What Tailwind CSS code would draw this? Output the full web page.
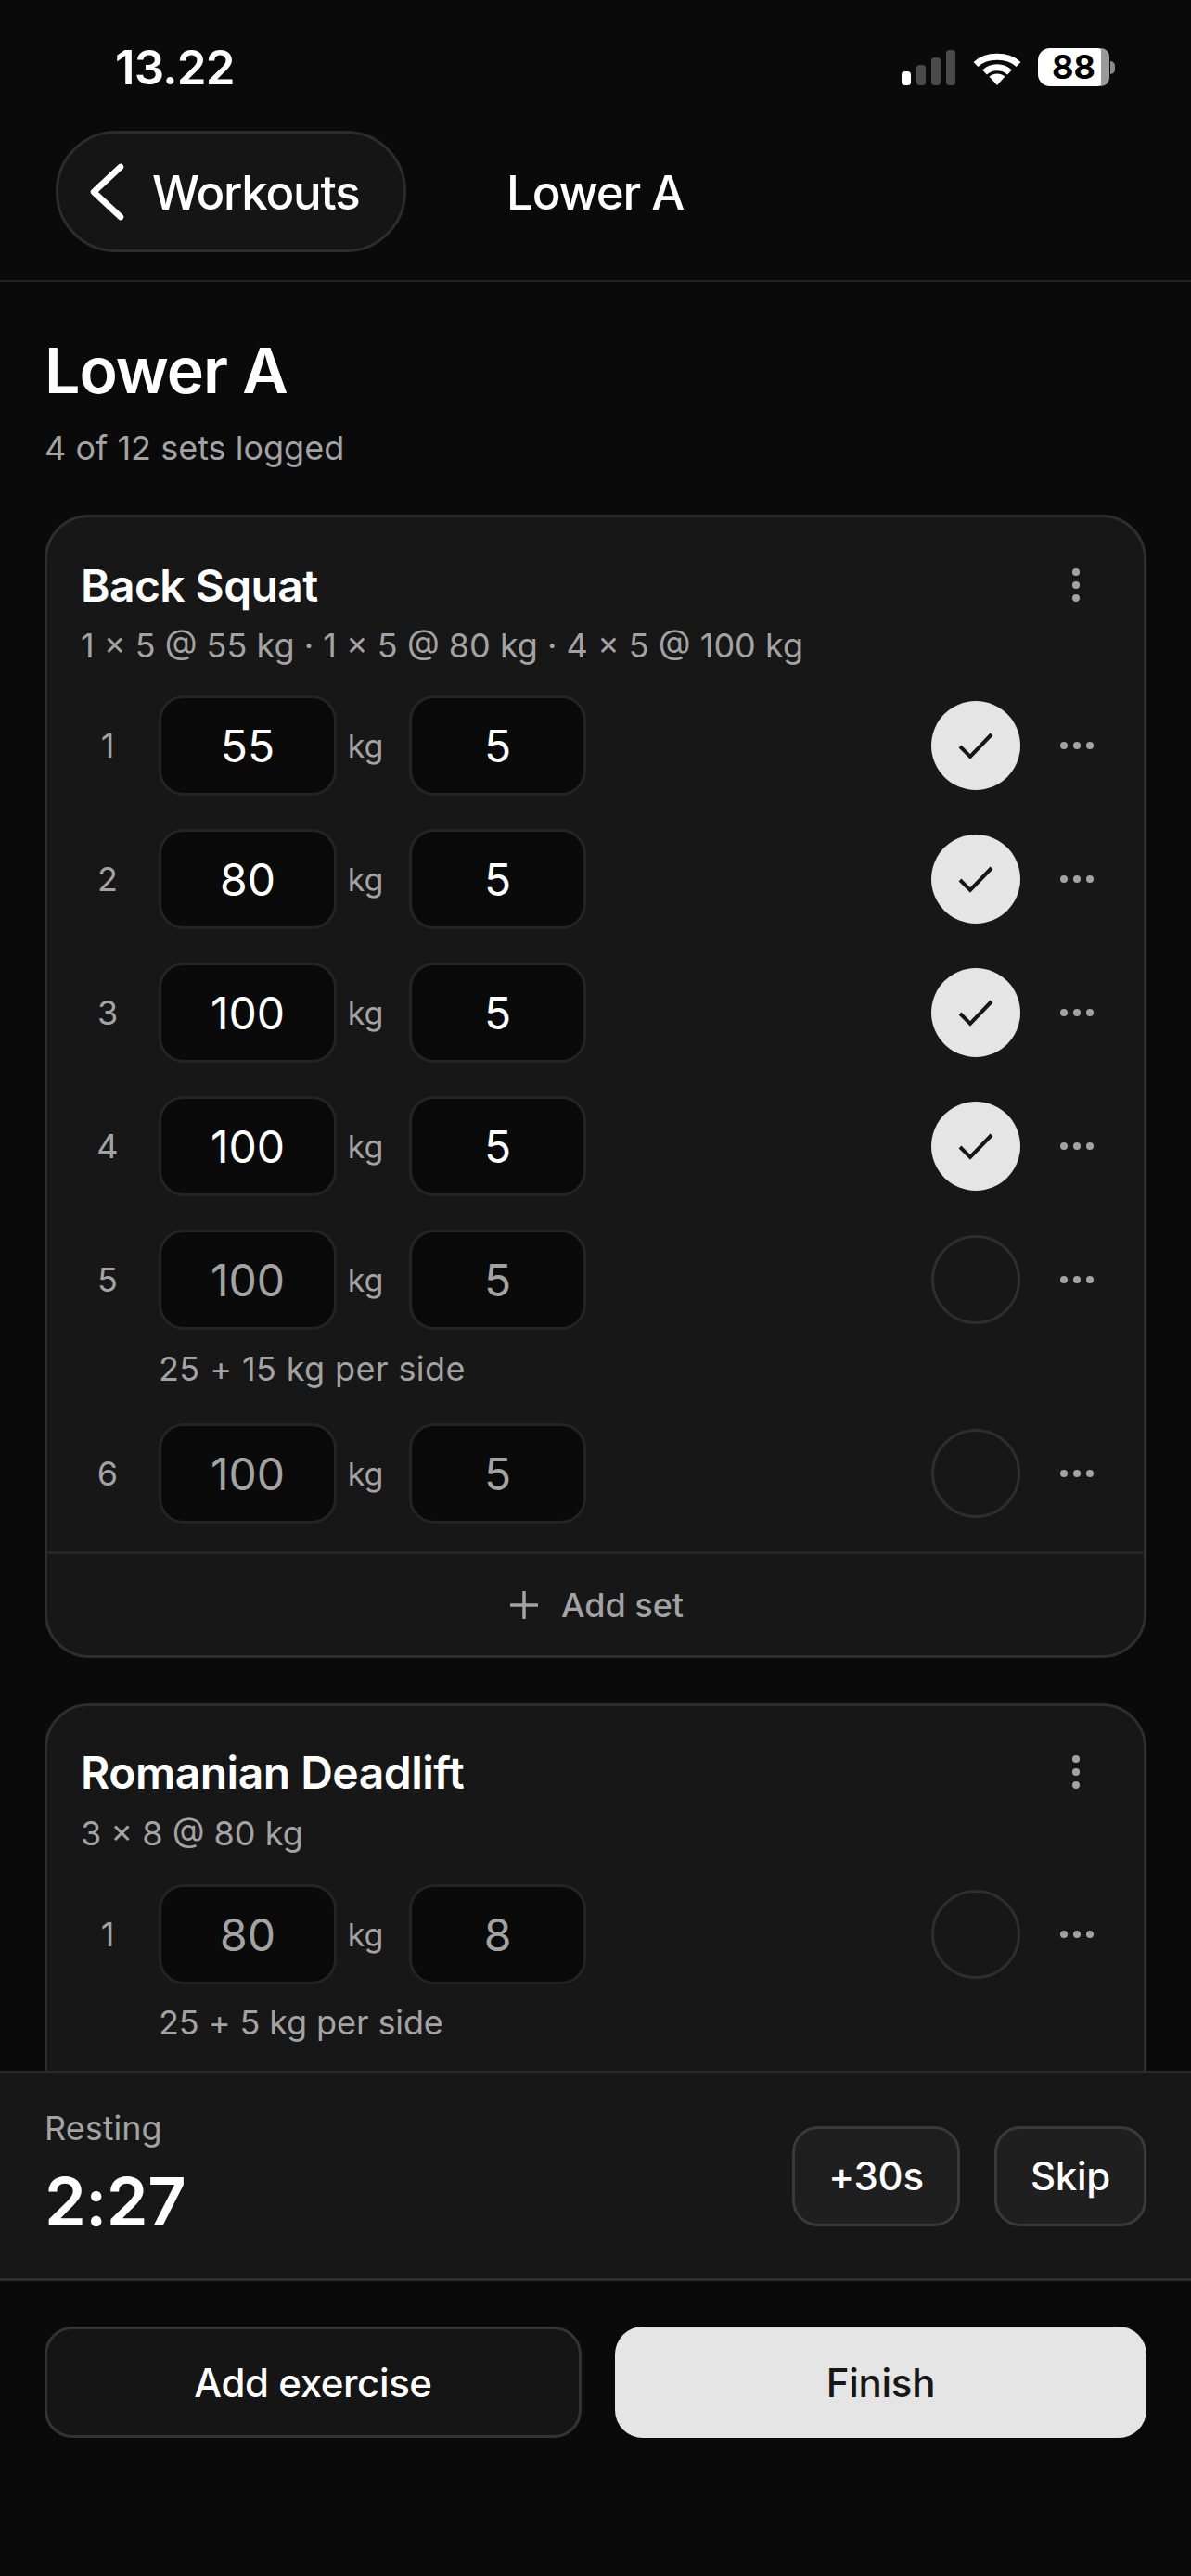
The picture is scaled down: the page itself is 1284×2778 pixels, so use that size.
<!DOCTYPE html>
<html lang="en">
<head>
<meta charset="UTF-8" />
<meta name="viewport" content="width=device-width, initial-scale=1.0" />
<script src="https://cdn.jsdelivr.net/npm/@tailwindcss/browser@4"></script>
<title>Lower A</title>
</head>
<body class="bg-[#0a0a0a] font-['Inter',sans-serif] text-white">
<div class="flex h-[2778px] w-[1284px] flex-col overflow-hidden">

  <!-- status bar -->
  <div class="flex h-[141px] shrink-0 items-start justify-between pl-[124px] pr-[82px] pt-[44px]">
    <span class="text-[51px] leading-[58px] font-semibold tracking-[-0.8px]">13.22</span>
    <div class="flex items-center pt-[8px]">
      <svg class="h-[41px] w-[60px]" viewBox="0 0 60 41"><rect x="1" y="25" width="10" height="15" rx="3.5" fill="#fff"/><rect x="17" y="18" width="10" height="22" rx="3.5" fill="#4a4a4a"/><rect x="33" y="10" width="10" height="30" rx="3.5" fill="#4a4a4a"/><rect x="49" y="2" width="10" height="38" rx="3.5" fill="#4a4a4a"/></svg>
      <svg class="ml-[18px] h-[38px] w-[52px]" viewBox="0 0 52 38"><path d="M3 15.5C14.5 4.5 37.5 4.500 49 15.500" fill="none" stroke="#fff" stroke-width="7"/><path d="M12.500 24C20 17 32 17 39.500 24" fill="none" stroke="#fff" stroke-width="7"/><path d="M17.500 28.500C22.500 24.500 29.500 24.500 34.500 28.500L26 38Z" fill="#fff"/></svg>
      <div class="relative ml-[18px] flex h-[41px] w-[77px] items-center justify-center rounded-[13px] bg-white">
        <div class="absolute inset-y-0 right-0 w-[9px] rounded-r-[13px] bg-[#9a9a9a]"></div>
        <span class="relative text-[36px] leading-[41px] font-bold text-black">88</span>
      </div>
      <div class="ml-[1px] h-[14px] w-[5px] rounded-r-full bg-[#8a8a8a]"></div>
    </div>
  </div>

  <!-- nav -->
  <div class="flex h-[163px] shrink-0 items-start border-b-[2px] border-[#222] pl-[60px]">
    <div class="flex h-[131px] w-[378px] items-center rounded-[65px] border-[3px] border-[#2c2c2c] bg-[#151515] pl-[34px]">
      <svg class="h-[62px] w-[38px]" viewBox="0 0 38 62"><path d="M33 4 4 31l29 27" fill="none" stroke="#fff" stroke-width="6.500" stroke-linecap="round" stroke-linejoin="round"/></svg>
      <span class="ml-[29px] pt-[2px] text-[51px] leading-none font-medium tracking-[-1.2px]">Workouts</span>
    </div>
    <span class="ml-[108px] flex h-[133px] items-center text-[51px] leading-none font-medium tracking-[-1.2px]">Lower A</span>
  </div>

  <!-- scrolling content -->
  <div class="min-h-0 flex-1 overflow-hidden px-[48px]">
    <h1 class="mt-[51px] text-[68px] leading-[88px] font-semibold tracking-[-1px]">Lower A</h1>
    <p class="mt-[18px] text-[36px] leading-[44px] text-[#a3a3a3]">4 of 12 sets logged</p>

    <!-- Back Squat -->
    <section class="mt-[50px] h-[1233px] rounded-[48px] border-[3px] border-[#2e2e2e] bg-[#171717]">
      <div class="flex h-[102px] items-end justify-between pl-[36px] pr-[69px]">
        <h2 class="text-[48px] leading-[56px] font-semibold tracking-[-0.6px]">Back Squat</h2>
        <svg class="mb-[11px] h-[36px] w-[8px]" viewBox="0 0 8 36" fill="#a3a3a3"><circle cx="4" cy="4" r="4"/><circle cx="4" cy="18" r="4"/><circle cx="4" cy="32" r="4"/></svg>
      </div>
      <p class="mt-[14px] pl-[36px] text-[36px] leading-[44px] text-[#a3a3a3]">1 × 5 @ 55 kg · 1 × 5 @ 80 kg · 4 × 5 @ 100 kg</p>
      <div class="mt-[32px] flex flex-col gap-[36px] px-[37px]">

        <div class="flex h-[108px] items-center">
          <span class="w-[83px] pr-[27px] text-center text-[36px] text-[#a3a3a3]">1</span>
          <div class="flex h-[108px] w-[192px] items-center justify-center rounded-[27px] border-[3px] border-[#242424] bg-[#0a0a0a] pt-[2px] text-[48px]">55</div>
          <span class="w-[78px] pr-[16px] text-center text-[34px] text-[#a3a3a3]">kg</span>
          <div class="flex h-[108px] w-[191px] items-center justify-center rounded-[27px] border-[3px] border-[#242424] bg-[#0a0a0a] pt-[2px] text-[48px]">5</div>
          <div class="ml-auto flex h-[96px] w-[96px] items-center justify-center rounded-full bg-[#e5e5e5]"><svg class="h-[30px] w-[38px]" viewBox="0 0 38 30"><path d="M2 16l11 11L36 3" fill="none" stroke="#171717" stroke-width="4"/></svg></div>
          <svg class="ml-[43px] mr-[17px] h-[8px] w-[36px]" viewBox="0 0 36 8" fill="#a3a3a3"><circle cx="4" cy="4" r="4"/><circle cx="18" cy="4" r="4"/><circle cx="32" cy="4" r="4"/></svg>
        </div>

        <div class="flex h-[108px] items-center">
          <span class="w-[83px] pr-[27px] text-center text-[36px] text-[#a3a3a3]">2</span>
          <div class="flex h-[108px] w-[192px] items-center justify-center rounded-[27px] border-[3px] border-[#242424] bg-[#0a0a0a] pt-[2px] text-[48px]">80</div>
          <span class="w-[78px] pr-[16px] text-center text-[34px] text-[#a3a3a3]">kg</span>
          <div class="flex h-[108px] w-[191px] items-center justify-center rounded-[27px] border-[3px] border-[#242424] bg-[#0a0a0a] pt-[2px] text-[48px]">5</div>
          <div class="ml-auto flex h-[96px] w-[96px] items-center justify-center rounded-full bg-[#e5e5e5]"><svg class="h-[30px] w-[38px]" viewBox="0 0 38 30"><path d="M2 16l11 11L36 3" fill="none" stroke="#171717" stroke-width="4"/></svg></div>
          <svg class="ml-[43px] mr-[17px] h-[8px] w-[36px]" viewBox="0 0 36 8" fill="#a3a3a3"><circle cx="4" cy="4" r="4"/><circle cx="18" cy="4" r="4"/><circle cx="32" cy="4" r="4"/></svg>
        </div>

        <div class="flex h-[108px] items-center">
          <span class="w-[83px] pr-[27px] text-center text-[36px] text-[#a3a3a3]">3</span>
          <div class="flex h-[108px] w-[192px] items-center justify-center rounded-[27px] border-[3px] border-[#242424] bg-[#0a0a0a] pt-[2px] text-[48px]">100</div>
          <span class="w-[78px] pr-[16px] text-center text-[34px] text-[#a3a3a3]">kg</span>
          <div class="flex h-[108px] w-[191px] items-center justify-center rounded-[27px] border-[3px] border-[#242424] bg-[#0a0a0a] pt-[2px] text-[48px]">5</div>
          <div class="ml-auto flex h-[96px] w-[96px] items-center justify-center rounded-full bg-[#e5e5e5]"><svg class="h-[30px] w-[38px]" viewBox="0 0 38 30"><path d="M2 16l11 11L36 3" fill="none" stroke="#171717" stroke-width="4"/></svg></div>
          <svg class="ml-[43px] mr-[17px] h-[8px] w-[36px]" viewBox="0 0 36 8" fill="#a3a3a3"><circle cx="4" cy="4" r="4"/><circle cx="18" cy="4" r="4"/><circle cx="32" cy="4" r="4"/></svg>
        </div>

        <div class="flex h-[108px] items-center">
          <span class="w-[83px] pr-[27px] text-center text-[36px] text-[#a3a3a3]">4</span>
          <div class="flex h-[108px] w-[192px] items-center justify-center rounded-[27px] border-[3px] border-[#242424] bg-[#0a0a0a] pt-[2px] text-[48px]">100</div>
          <span class="w-[78px] pr-[16px] text-center text-[34px] text-[#a3a3a3]">kg</span>
          <div class="flex h-[108px] w-[191px] items-center justify-center rounded-[27px] border-[3px] border-[#242424] bg-[#0a0a0a] pt-[2px] text-[48px]">5</div>
          <div class="ml-auto flex h-[96px] w-[96px] items-center justify-center rounded-full bg-[#e5e5e5]"><svg class="h-[30px] w-[38px]" viewBox="0 0 38 30"><path d="M2 16l11 11L36 3" fill="none" stroke="#171717" stroke-width="4"/></svg></div>
          <svg class="ml-[43px] mr-[17px] h-[8px] w-[36px]" viewBox="0 0 36 8" fill="#a3a3a3"><circle cx="4" cy="4" r="4"/><circle cx="18" cy="4" r="4"/><circle cx="32" cy="4" r="4"/></svg>
        </div>

        <div>
          <div class="flex h-[108px] items-center">
            <span class="w-[83px] pr-[27px] text-center text-[36px] text-[#a3a3a3]">5</span>
            <div class="flex h-[108px] w-[192px] items-center justify-center rounded-[27px] border-[3px] border-[#242424] bg-[#0a0a0a] pt-[2px] text-[48px] text-[#a3a3a3]">100</div>
            <span class="w-[78px] pr-[16px] text-center text-[34px] text-[#a3a3a3]">kg</span>
            <div class="flex h-[108px] w-[191px] items-center justify-center rounded-[27px] border-[3px] border-[#242424] bg-[#0a0a0a] pt-[2px] text-[48px] text-[#a3a3a3]">5</div>
            <div class="ml-auto h-[96px] w-[96px] rounded-full border-[3px] border-[#2e2e2e]"></div>
            <svg class="ml-[43px] mr-[17px] h-[8px] w-[36px]" viewBox="0 0 36 8" fill="#a3a3a3"><circle cx="4" cy="4" r="4"/><circle cx="18" cy="4" r="4"/><circle cx="32" cy="4" r="4"/></svg>
          </div>
          <p class="mt-[20px] pl-[83px] text-[36px] leading-[44px] tracking-[0.4px] text-[#a3a3a3]">25 + 15 kg per side</p>
        </div>

        <div class="mt-[1px] flex h-[108px] items-center">
          <span class="w-[83px] pr-[27px] text-center text-[36px] text-[#a3a3a3]">6</span>
          <div class="flex h-[108px] w-[192px] items-center justify-center rounded-[27px] border-[3px] border-[#242424] bg-[#0a0a0a] pt-[2px] text-[48px] text-[#a3a3a3]">100</div>
          <span class="w-[78px] pr-[16px] text-center text-[34px] text-[#a3a3a3]">kg</span>
          <div class="flex h-[108px] w-[191px] items-center justify-center rounded-[27px] border-[3px] border-[#242424] bg-[#0a0a0a] pt-[2px] text-[48px] text-[#a3a3a3]">5</div>
          <div class="ml-auto h-[96px] w-[96px] rounded-full border-[3px] border-[#2e2e2e]"></div>
          <svg class="ml-[43px] mr-[17px] h-[8px] w-[36px]" viewBox="0 0 36 8" fill="#a3a3a3"><circle cx="4" cy="4" r="4"/><circle cx="18" cy="4" r="4"/><circle cx="32" cy="4" r="4"/></svg>
        </div>
      </div>
      <div class="mt-[30px] flex h-[110px] items-center justify-center border-t-[3px] border-[#262626] pl-[3px] pt-[2px] text-[#a3a3a3]">
        <svg class="h-[30px] w-[30px]" viewBox="0 0 30 30"><path d="M15 1v28M1 15h28" fill="none" stroke="#a3a3a3" stroke-width="3.500" stroke-linecap="round"/></svg>
        <span class="ml-[25px] text-[36px] font-medium">Add set</span>
      </div>
    </section>

    <!-- Romanian Deadlift -->
    <section class="mt-[49px] h-[600px] rounded-[48px] border-[3px] border-[#2e2e2e] bg-[#171717]">
      <div class="flex h-[100px] items-end justify-between pl-[36px] pr-[69px]">
        <h2 class="text-[48px] leading-[56px] font-semibold tracking-[-0.5px]">Romanian Deadlift</h2>
        <svg class="mb-[11px] h-[36px] w-[8px]" viewBox="0 0 8 36" fill="#a3a3a3"><circle cx="4" cy="4" r="4"/><circle cx="4" cy="18" r="4"/><circle cx="4" cy="32" r="4"/></svg>
      </div>
      <p class="mt-[15px] pl-[36px] text-[36px] leading-[44px] text-[#a3a3a3]">3 × 8 @ 80 kg</p>
      <div class="mt-[33px] px-[37px]">
        <div class="flex h-[108px] items-center">
          <span class="w-[83px] pr-[27px] text-center text-[36px] text-[#a3a3a3]">1</span>
          <div class="flex h-[108px] w-[192px] items-center justify-center rounded-[27px] border-[3px] border-[#242424] bg-[#0a0a0a] pt-[2px] text-[48px] text-[#a3a3a3]">80</div>
          <span class="w-[78px] pr-[16px] text-center text-[34px] text-[#a3a3a3]">kg</span>
          <div class="flex h-[108px] w-[191px] items-center justify-center rounded-[27px] border-[3px] border-[#242424] bg-[#0a0a0a] pt-[2px] text-[48px] text-[#a3a3a3]">8</div>
          <div class="ml-auto h-[96px] w-[96px] rounded-full border-[3px] border-[#2e2e2e]"></div>
          <svg class="ml-[43px] mr-[17px] h-[8px] w-[36px]" viewBox="0 0 36 8" fill="#a3a3a3"><circle cx="4" cy="4" r="4"/><circle cx="18" cy="4" r="4"/><circle cx="32" cy="4" r="4"/></svg>
        </div>
        <p class="mt-[19px] pl-[83px] text-[36px] leading-[44px] tracking-[-0.1px] text-[#a3a3a3]">25 + 5 kg per side</p>
      </div>
    </section>
  </div>

  <!-- rest timer -->
  <div class="flex h-[227px] shrink-0 items-center justify-between border-y-[3px] border-[#2e2e2e] bg-[#171717] px-[48px]">
    <div class="-mt-[6px]">
      <p class="text-[36px] leading-[44px] text-[#a3a3a3]">Resting</p>
      <p class="mt-[17px] text-[72px] leading-[80px] font-semibold tracking-[-0.5px]">2:27</p>
    </div>
    <div class="flex gap-[37px]">
      <div class="flex h-[108px] w-[181px] items-center justify-center rounded-[28px] border-[3px] border-[#3a3a3a] bg-[#1f1f1f] text-[42px] font-medium tracking-[-0.3px]">+30s</div>
      <div class="flex h-[108px] w-[164px] items-center justify-center rounded-[28px] border-[3px] border-[#3a3a3a] bg-[#1f1f1f] text-[42px] font-medium tracking-[-0.3px]">Skip</div>
    </div>
  </div>

  <!-- actions -->
  <div class="flex h-[318px] shrink-0 items-start gap-[36px] px-[48px] pt-[49px]">
    <div class="flex h-[120px] w-[579px] items-center justify-center rounded-[30px] border-[3px] border-[#333] bg-[#151515] text-[42px] font-medium tracking-[-0.4px]">Add exercise</div>
    <div class="flex h-[120px] flex-1 items-center justify-center rounded-[30px] bg-[#e5e5e5] text-[42px] font-medium tracking-[-0.3px] text-[#171717]">Finish</div>
  </div>
</div>
</body>
</html>
